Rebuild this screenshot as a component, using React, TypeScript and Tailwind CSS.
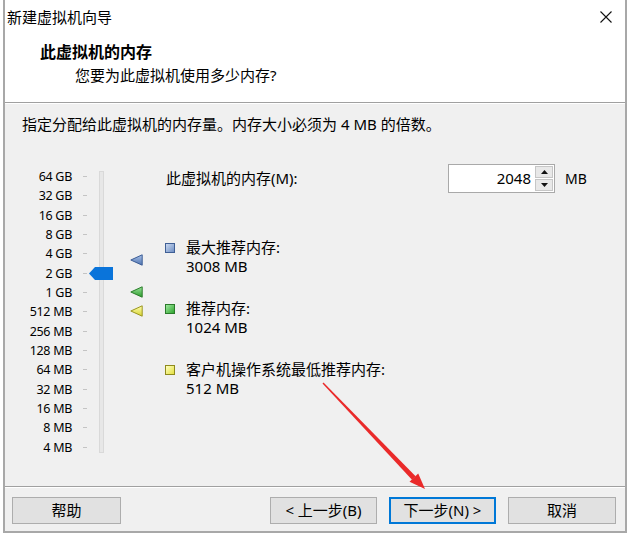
const labels = [
  "64 GB",
  "32 GB",
  "16 GB",
  "8 GB",
  "4 GB",
  "2 GB",
  "1 GB",
  "512 MB",
  "256 MB",
  "128 MB",
  "64 MB",
  "32 MB",
  "16 MB",
  "8 MB",
  "4 MB",
];

function Marker({ from, to, edge }: { from: string; to: string; edge: string }) {
  const id = `g${from.slice(1)}`;
  return (
    <svg width="13" height="12" viewBox="0 0 13 12">
      <defs>
        <linearGradient id={id} x1="0" y1="0" x2="0" y2="1">
          <stop offset="0" stopColor={from} />
          <stop offset="1" stopColor={to} />
        </linearGradient>
      </defs>
      <polygon points="0.8,6 12.2,0.8 12.2,11.2" fill={`url(#${id})`} stroke={edge} strokeWidth="1" />
    </svg>
  );
}

function Square({ from, to, edge }: { from: string; to: string; edge: string }) {
  return (
    <div
      className="w-[10px] h-[10px] border shrink-0"
      style={{ borderColor: edge, background: `linear-gradient(135deg, ${from}, ${to})` }}
    />
  );
}

function Legend({
  title,
  value,
  sq,
}: {
  title: string;
  value: string;
  sq: { from: string; to: string; edge: string };
}) {
  return (
    <div className="flex">
      <div className="h-[19px] flex items-center">
        <Square {...sq} />
      </div>
      <div className="ml-[11px] leading-[19px]">
        <div>{title}</div>
        <div>{value}</div>
      </div>
    </div>
  );
}

export default function App() {
  return (
    <div
      className="relative w-[631px] h-[535px] bg-white text-black text-[15px]"
      style={{ fontFamily: '"Noto Sans", "Noto Sans CJK SC", sans-serif' }}
    >
      <div className="ml-[3px] w-[624px] h-[533px] border-x-2 border-b-2 border-[#a8a8a8] flex flex-col">
        {/* Title bar */}
        <div className="h-[34px] bg-white flex items-center justify-between pl-[2px] pr-[13px]">
          <span className="leading-[20px]">新建虚拟机向导</span>
          <svg width="12" height="12" viewBox="0 0 12 12">
            <path d="M0.5 0.5 L11.5 11.5 M11.5 0.5 L0.5 11.5" stroke="#111" strokeWidth="1.1" />
          </svg>
        </div>

        {/* Header */}
        <div className="h-[68px] bg-white pt-[7px]">
          <div className="pl-[35px] text-[16px] font-bold leading-[22px]">此虚拟机的内存</div>
          <div className="pl-[70px] mt-[2px] leading-[20px]">您要为此虚拟机使用多少内存?</div>
        </div>
        <div className="h-px bg-[#a0a0a0]" />
        <div className="h-px bg-white" />

        {/* Body */}
        <div className="flex-1 bg-[#f0f0f0] relative">
          <div className="pl-[17px] mt-[10px] leading-[20px]">
            指定分配给此虚拟机的内存量。内存大小必须为 4 MB 的倍数。
          </div>

          <div className="flex mt-[30px]">
            {/* Slider */}
            <div className="relative w-[160px] h-[292px] flex">
              <div className="w-[67px] pt-[3px] text-right text-[12.5px] tracking-[-0.3px]">
                {labels.map((l) => (
                  <div key={l} className="h-[19.33px] leading-[19.33px]">
                    {l}
                  </div>
                ))}
              </div>
              <div className="ml-[11px] w-[4px] pt-[3px]">
                {labels.map((l) => (
                  <div key={l} className="h-[19.33px] flex items-center">
                    <div className="w-[4px] h-px bg-[#c4c4c4]" />
                  </div>
                ))}
              </div>
              <div className="ml-[12px] mt-[7px] w-[5px] h-[282px] bg-[#e7e7e7] border border-[#d9d9d9]" />

              {/* thumb */}
              <svg className="absolute left-[84px] top-[103px]" width="24" height="13" viewBox="0 0 24 13">
                <polygon points="0,6.5 6,0 24,0 24,13 6,13" fill="#0a74da" />
              </svg>
              {/* markers */}
              <div className="absolute left-[125px] top-[90px]">
                <Marker from="#a9c1e8" to="#4f73b0" edge="#3c5d96" />
              </div>
              <div className="absolute left-[125px] top-[122px]">
                <Marker from="#9be39b" to="#2a9a2a" edge="#2b7d2b" />
              </div>
              <div className="absolute left-[125px] top-[141px]">
                <Marker from="#ffffb0" to="#d6d230" edge="#9a9620" />
              </div>
            </div>

            {/* Right side */}
            <div className="flex-1">
              <div className="flex items-center h-[29px]">
                <div className="w-[283px] pl-[1px]">此虚拟机的内存(M):</div>
                <div className="w-[107px] h-[29px] flex border border-[#a9a9a9] bg-white">
                  <div className="flex-1 text-right pr-[4px] leading-[27px]">2048</div>
                  <div className="w-[19px] flex flex-col gap-px py-px pr-px">
                    <div className="flex-1 bg-[#e8e8e8] border border-[#c6c6c6] flex items-center justify-center">
                      <svg width="7" height="4" viewBox="0 0 7 4">
                        <polygon points="3.5,0 7,4 0,4" fill="#111" />
                      </svg>
                    </div>
                    <div className="flex-1 bg-[#e8e8e8] border border-[#c6c6c6] flex items-center justify-center">
                      <svg width="7" height="4" viewBox="0 0 7 4">
                        <polygon points="0,0 7,0 3.5,4" fill="#111" />
                      </svg>
                    </div>
                  </div>
                </div>
                <div className="ml-[10px] text-[14px]">MB</div>
              </div>

              <div className="mt-[45px] flex flex-col gap-[23px]">
                <Legend
                  title="最大推荐内存:"
                  value="3008 MB"
                  sq={{ from: "#c9d8f0", to: "#6f8fc4", edge: "#3f5f95" }}
                />
                <Legend
                  title="推荐内存:"
                  value="1024 MB"
                  sq={{ from: "#9fe89f", to: "#2fa52f", edge: "#2a7a2a" }}
                />
                <Legend
                  title="客户机操作系统最低推荐内存:"
                  value="512 MB"
                  sq={{ from: "#ffffc0", to: "#e3df40", edge: "#8e8a1c" }}
                />
              </div>
            </div>
          </div>
        </div>

        <div className="h-px bg-[#a0a0a0]" />
        <div className="h-px bg-white" />

        {/* Buttons */}
        <div className="h-[43px] bg-[#f0f0f0] flex items-start pt-[9px] pl-[7px] pr-[9px]">
          <button className="w-[109px] h-[27px] bg-[#e1e1e1] border border-[#adadad]">帮助</button>
          <div className="flex-1" />
          <div className="flex gap-[12px]">
            <button className="w-[107px] h-[27px] bg-[#e1e1e1] border border-[#adadad]">&lt; 上一步(B)</button>
            <button className="w-[107px] h-[27px] bg-[#e1e1e1] border-2 border-[#0078d7]">下一步(N) &gt;</button>
            <button className="w-[108px] h-[27px] bg-[#e1e1e1] border border-[#adadad]">取消</button>
          </div>
        </div>
      </div>

      {/* annotation arrow */}
      <svg className="absolute left-0 top-0 pointer-events-none" width="631" height="535" viewBox="0 0 631 535">
        <polygon points="322.5,383.5 323.5,382.5 415.6,476.2 412.0,479.8" fill="#ea2a2a" />
        <polygon points="425,489 409.5,481.8 418.2,473.4" fill="#ea2a2a" />
      </svg>
    </div>
  );
}
